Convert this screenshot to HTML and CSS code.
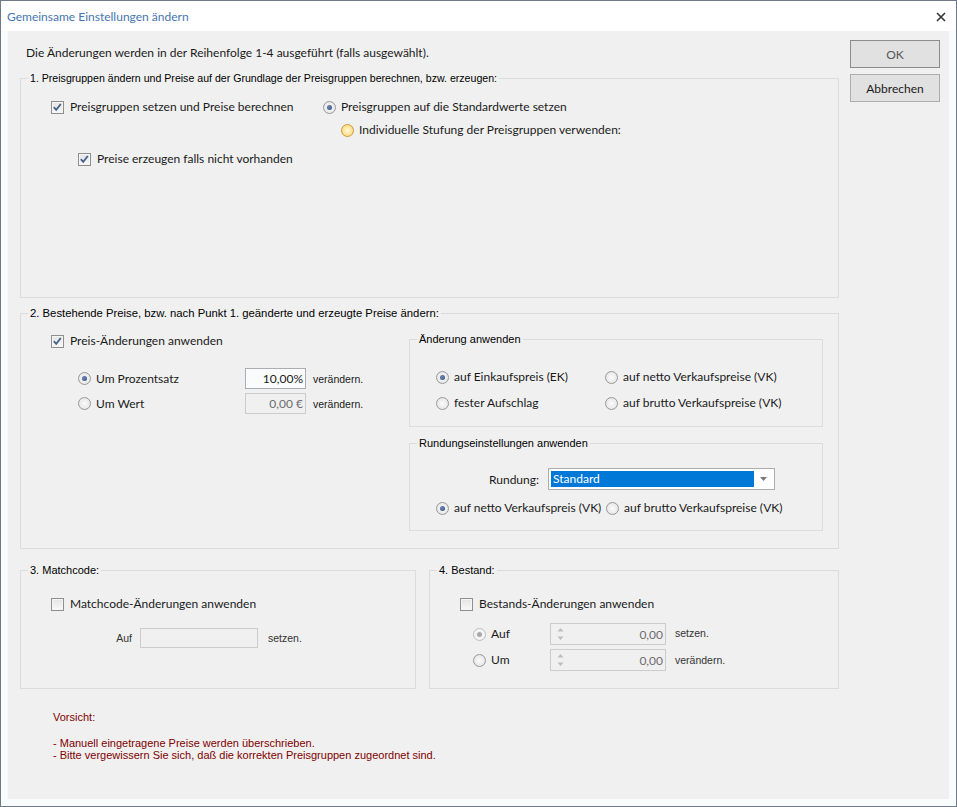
FILE: index.html
```html
<!DOCTYPE html>
<html lang="de">
<head>
<meta charset="utf-8">
<title>Gemeinsame Einstellungen ändern</title>
<link rel="stylesheet" href="styles.css">
</head>
<body>
<div class="window">
  <div class="titlebar">
    <span class="title">Gemeinsame Einstellungen ändern</span>
    <svg class="close" width="10" height="10" viewBox="0 0 10 10"><path d="M1 1L9 9M9 1L1 9" stroke="#333" stroke-width="1.6" fill="none"/></svg>
  </div>
  <div class="client">
    <div class="main">
      <p class="intro">Die Änderungen werden in der Reihenfolge 1-4 ausgeführt (falls ausgewählt).</p>

      <fieldset class="group g1">
        <legend class="narrow">1. Preisgruppen ändern und Preise auf der Grundlage der Preisgruppen berechnen, bzw. erzeugen:</legend>
        <div class="row g1-row1">
          <label class="ctl check w272"><span class="cb"><svg width="11" height="11" viewBox="0 0 11 11"><path d="M1.8 5.2L4.2 7.8L8.8 2" stroke="#46608c" stroke-width="1.8" fill="none"/></svg></span>Preisgruppen setzen und Preise berechnen</label>
          <label class="ctl radio"><span class="rb on"></span>Preisgruppen auf die Standardwerte setzen</label>
        </div>
        <div class="row g1-row2">
          <label class="ctl radio"><span class="rb hover"></span>Individuelle Stufung der Preisgruppen verwenden:</label>
        </div>
        <div class="row g1-row3">
          <label class="ctl check"><span class="cb"><svg width="11" height="11" viewBox="0 0 11 11"><path d="M1.8 5.2L4.2 7.8L8.8 2" stroke="#46608c" stroke-width="1.8" fill="none"/></svg></span>Preise erzeugen falls nicht vorhanden</label>
        </div>
      </fieldset>

      <fieldset class="group g2">
        <legend class="wider">2. Bestehende Preise, bzw. nach Punkt 1. geänderte und erzeugte Preise ändern:</legend>
        <div class="g2-body">
          <div class="g2-left">
            <div class="row">
              <label class="ctl check"><span class="cb"><svg width="11" height="11" viewBox="0 0 11 11"><path d="M1.8 5.2L4.2 7.8L8.8 2" stroke="#46608c" stroke-width="1.8" fill="none"/></svg></span>Preis-Änderungen anwenden</label>
            </div>
            <div class="vrow first">
              <label class="ctl radio vlabel"><span class="rb on"></span>Um Prozentsatz</label>
              <span class="txt">10,00%</span>
              <span class="ms after">verändern.</span>
            </div>
            <div class="vrow">
              <label class="ctl radio vlabel"><span class="rb"></span>Um Wert</label>
              <span class="txt disabled">0,00 €</span>
              <span class="ms after">verändern.</span>
            </div>
          </div>
          <div class="g2-right">
            <fieldset class="group inner">
              <legend>Änderung anwenden</legend>
              <div class="opts">
                <label class="ctl radio"><span class="rb on"></span>auf Einkaufspreis (EK)</label>
                <label class="ctl radio"><span class="rb"></span>auf netto Verkaufspreise (VK)</label>
                <label class="ctl radio"><span class="rb"></span>fester Aufschlag</label>
                <label class="ctl radio"><span class="rb"></span>auf brutto Verkaufspreise (VK)</label>
              </div>
            </fieldset>
            <fieldset class="group inner second">
              <legend>Rundungseinstellungen anwenden</legend>
              <div class="selrow">
                <span class="sellabel">Rundung:</span>
                <div class="select">
                  <span class="selval">Standard</span>
                  <span class="selarrow"><svg width="7" height="4" viewBox="0 0 7 4"><path d="M0 0H7L3.5 4Z" fill="#7a7a7a"/></svg></span>
                </div>
              </div>
              <div class="opts round">
                <label class="ctl radio"><span class="rb on"></span>auf netto Verkaufspreis (VK)</label>
                <label class="ctl radio"><span class="rb"></span>auf brutto Verkaufspreise (VK)</label>
              </div>
            </fieldset>
          </div>
        </div>
      </fieldset>

      <div class="pair">
        <fieldset class="group g3">
          <legend>3. Matchcode:</legend>
          <div class="row">
            <label class="ctl check"><span class="cb"></span>Matchcode-Änderungen anwenden</label>
          </div>
          <div class="aufrow">
            <span class="ms auflabel">Auf</span>
            <span class="txt disabled wide"></span>
            <span class="ms after2">setzen.</span>
          </div>
        </fieldset>
        <fieldset class="group g4">
          <legend>4. Bestand:</legend>
          <div class="row">
            <label class="ctl check"><span class="cb"></span>Bestands-Änderungen anwenden</label>
          </div>
          <div class="brow first">
            <label class="ctl radio blabel"><span class="rb dis"></span>Auf</label>
            <div class="spin">
              <span class="arrows"><svg width="7" height="14" viewBox="0 0 7 14"><path d="M3.5 1L6.5 4.5H0.5Z M3.5 13L6.5 9.5H0.5Z" fill="#bdbdbd"/></svg></span>
              <span class="spinval">0,00</span>
            </div>
            <span class="ms after3 up">setzen.</span>
          </div>
          <div class="brow">
            <label class="ctl radio blabel"><span class="rb"></span>Um</label>
            <div class="spin">
              <span class="arrows"><svg width="7" height="14" viewBox="0 0 7 14"><path d="M3.5 1L6.5 4.5H0.5Z M3.5 13L6.5 9.5H0.5Z" fill="#bdbdbd"/></svg></span>
              <span class="spinval">0,00</span>
            </div>
            <span class="ms after3">verändern.</span>
          </div>
        </fieldset>
      </div>

      <div class="warn">
        <p class="warn-head">Vorsicht:</p>
        <p class="warn-line">- Manuell eingetragene Preise werden überschrieben.</p>
        <p class="warn-line">- Bitte vergewissern Sie sich, daß die korrekten Preisgruppen zugeordnet sind.</p>
      </div>
    </div>
    <div class="buttons">
      <button class="btn ok">OK</button>
      <button class="btn">Abbrechen</button>
    </div>
  </div>
</div>
</body>
</html>
```
FILE: styles.css
```css
* { box-sizing: border-box; }
html, body { margin: 0; padding: 0; }
body {
  width: 957px; height: 807px; overflow: hidden; background: #fff;
  font-family: Lato, "Noto Sans", sans-serif; font-size: 12px; color: #1a1a1a;
}
p { margin: 0; }
.window {
  width: 957px; height: 807px;
  border: 1px solid #6f7a86;
  background: #f8fcfc;
  padding: 0 7px 7px 7px;
  display: flex; flex-direction: column;
}
.titlebar {
  height: 30px; margin: 0 -7px; padding: 0 10px 0 6px;
  background: #fff;
  display: flex; align-items: center; justify-content: space-between;
}
.title { color: #4675b0; font-size: 12px; }
.close { margin-top: 1px; }
.client {
  flex: 1; background: #f0f0f0;
  display: flex; padding-top: 9px;
}
.main { width: 842px; }
.buttons { width: 90px; display: flex; flex-direction: column; gap: 6px; }
.btn {
  height: 28px; border: 1px solid #adadad; background: #e1e1e1;
  font-family: inherit; font-size: 12px; color: #1a1a1a; padding: 0;
}
.btn.ok { border-color: #8c8c8c; color: #555; }

.intro { margin: 5px 0 0 18px; line-height: 16px; }

.group {
  margin: 0; padding: 0; min-width: 0;
  border: 1px solid #dcdcdc;
}
.group legend {
  margin-left: 7px; padding: 0 2px;
  font-family: "Liberation Sans", Arial, sans-serif; font-size: 11px; line-height: 12px; color: #000;
}
.group legend.narrow { font-size: 10.6px; }
.group legend.wider { font-size: 11.3px; }
.ms { font-family: "Liberation Sans", Arial, sans-serif; font-size: 10.5px; }

.row { height: 16px; display: flex; align-items: center; }
.ctl { display: flex; align-items: center; line-height: 16px; white-space: nowrap; }
.check { gap: 6px; }
.radio { gap: 5px; }
.cb {
  width: 13px; height: 13px; flex: none;
  border: 1px solid #8f8f8f;
  background: linear-gradient(#e4e4e4, #f8f8f8);
  box-shadow: inset 0 0 0 1px #f5f5f5;
  display: flex; align-items: center; justify-content: center;
}
.rb {
  width: 13px; height: 13px; flex: none; border-radius: 50%;
  border: 1px solid #979898;
  background: radial-gradient(circle, #fbfbfb 0%, #e8e8e8 70%, #dcdcdc 100%);
  display: flex; align-items: center; justify-content: center;
}
.rb.on::after {
  content: ""; width: 5px; height: 5px; border-radius: 50%;
  background: radial-gradient(circle at 40% 40%, #6d87b6, #2f4c7c);
}
.rb.hover {
  border-color: #c99a3a;
  background: radial-gradient(circle, #fff8d8 0%, #fce08c 65%, #f2c95e 100%);
}
.rb.dis { border-color: #bdbdbd; background: #f4f4f4; }
.rb.dis::after {
  content: ""; width: 5px; height: 5px; border-radius: 50%; background: #a8a8a8;
}

/* group 1 */
.g1 { margin: 11px 0 0 12px; width: 819px; height: 226px; }
.g1-row1 { margin-top: 15px; padding-left: 30px; }
.w272 { width: 272px; }
.g1-row2 { margin-top: 7px; padding-left: 320px; }
.g1-row3 { margin-top: 13px; padding-left: 57px; }

/* group 2 */
.g2 { margin: 9px 0 0 12px; width: 819px; height: 242px; }
.g2-body { display: flex; margin-top: 14px; }
.g2-left { width: 388px; padding-left: 30px; }
.vrow { display: flex; align-items: center; height: 21px; margin-top: 4px; }
.vrow.first { margin-top: 19px; }
.vlabel { width: 194px; padding-left: 27px; }
.txt {
  width: 61px; height: 21px; border: 1px solid #abadb3; background: #fafcfc;
  text-align: right; padding-right: 2px; line-height: 19px;
}
.txt.disabled { border-color: #cccccc; background: #f0f0f0; color: #6d6d6d; }
.after { margin-left: 7px; }
.g2-right { width: 414px; }
.inner { width: 414px; height: 94px; }
.inner.second { margin-top: 10px; }
.opts {
  margin-top: 24px; padding-left: 26px;
  display: grid; grid-template-columns: 169px auto; row-gap: 10px;
}
.opts .ctl { height: 16px; }
.opts.round { margin-top: 10px; grid-template-columns: 170px auto; }
.selrow { display: flex; align-items: center; margin-top: 19px; }
.sellabel { width: 129px; text-align: right; margin-right: 9px; }
.select {
  width: 227px; height: 22px; border: 1px solid #adadad; background: #fff;
  display: flex; padding: 2px;
}
.selval { width: 203px; background: #0078d7; color: #fff; padding-left: 2px; line-height: 16px; }
.selarrow { flex: 1; display: flex; align-items: center; justify-content: center; }

/* group 3 & 4 */
.pair { display: flex; gap: 13px; margin: 15px 0 0 12px; }
.g3 { width: 396px; height: 125px; }
.g4 { width: 410px; height: 125px; }
.g3 .row, .g4 .row { margin-top: 20px; padding-left: 30px; }
.aufrow { display: flex; align-items: center; margin-top: 16px; height: 20px; }
.auflabel { width: 119px; text-align: right; padding-right: 8px; color: #333; }
.txt.wide { width: 118px; height: 20px; }
.after2 { margin-left: 10px; color: #333; }
.brow { display: flex; align-items: center; height: 22px; margin-top: 4px; }
.brow.first { margin-top: 11px; }
.blabel { width: 120px; padding-left: 43px; }
.spin {
  width: 116px; height: 22px; border: 1px solid #cccccc; background: #f0f0f0;
  display: flex; align-items: center;
}
.arrows { width: 18px; display: flex; justify-content: center; }
.spinval { flex: 1; text-align: right; padding-right: 2px; color: #6d6d6d; }
.after3 { margin-left: 9px; color: #333; }
.after3.up { margin-top: -2px; }

.warn { margin: 22px 0 0 45px; font-family: "Liberation Sans", Arial, sans-serif; font-size: 11px; color: #800000; }
.warn-head { line-height: 13px; margin-bottom: 13px; }
.warn-line { line-height: 12px; }
```
